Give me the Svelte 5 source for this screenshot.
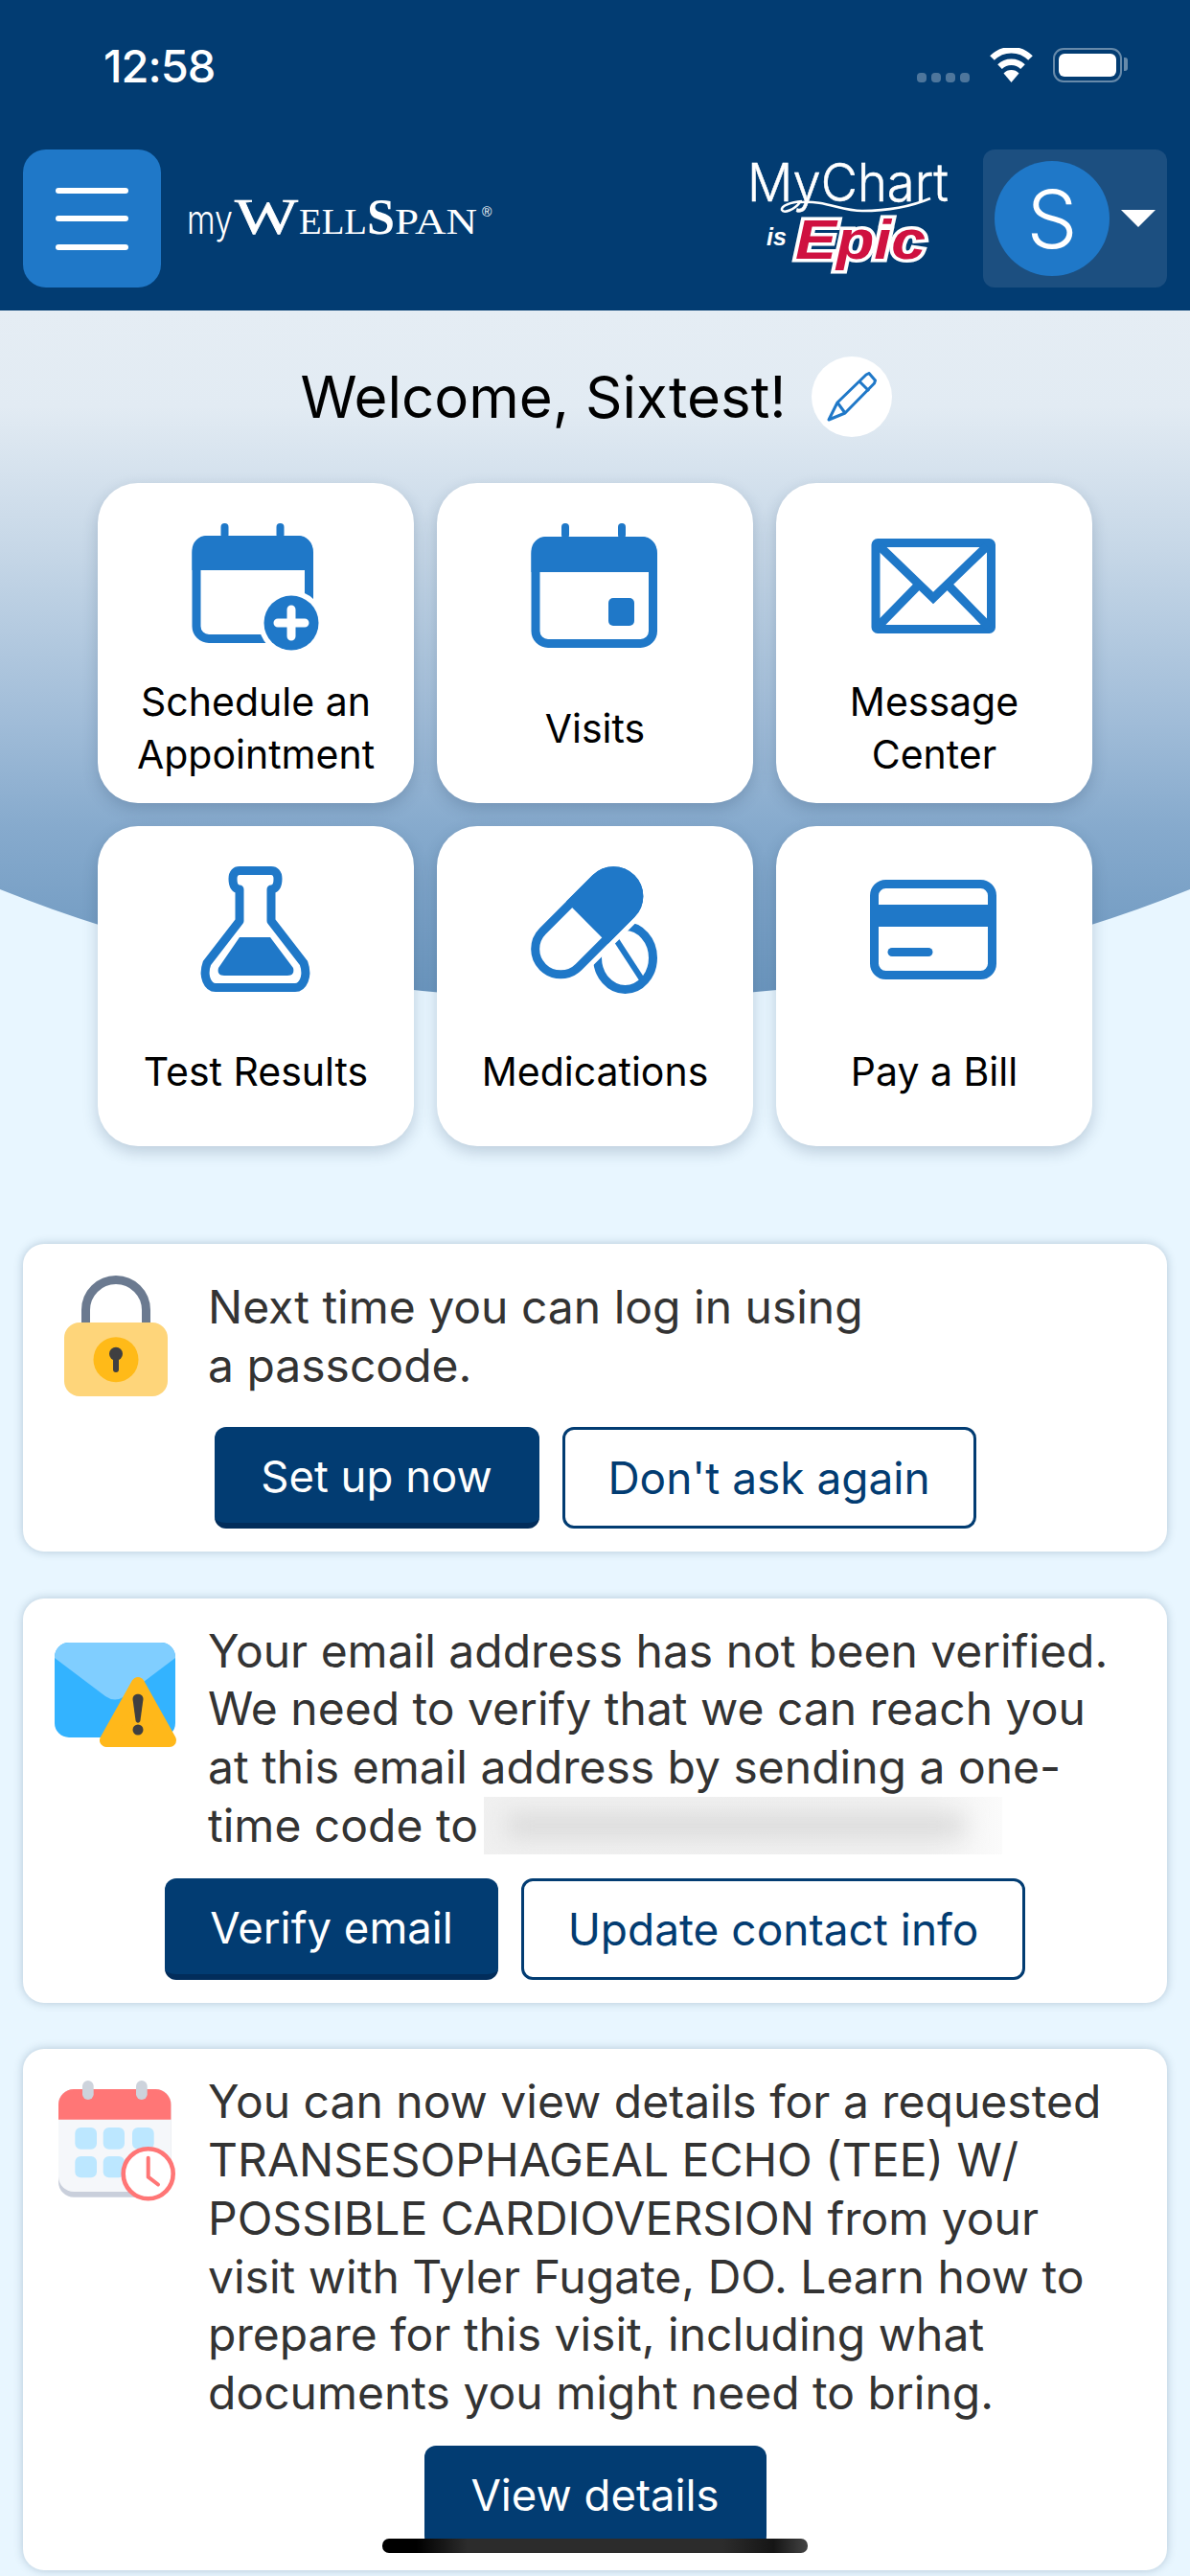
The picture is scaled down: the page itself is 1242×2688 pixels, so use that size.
<script>
  const bands = [0, 1, 2];
  const pegs = [34.5, 92.5];
</script>

<div class="screen">
  <header class="top">
    <div class="status">
      <span class="clock">12:58</span>
      <div class="status-icons">
        <div class="signal"><i></i><i></i><i></i><i></i></div>
        <svg class="wifi" width="47" height="36" viewBox="0 0 47 36">
          <path d="M3.5 10.6a28 28 0 0 1 40 0" fill="none" stroke="#fff" stroke-width="6.5" />
          <path d="M11.5 19.6a17 17 0 0 1 24 0" fill="none" stroke="#fff" stroke-width="6.5" />
          <path d="M23.5 36 L15.5 26.5 a11 11 0 0 1 16 0z" fill="#fff" />
        </svg>
        <div class="battery"><div class="charge"></div></div>
      </div>
    </div>
    <nav class="nav">
      <button class="menu" aria-label="Menu">
        {#each bands as b (b)}<span></span>{/each}
      </button>
      <svg class="wellspan" width="326" height="60" viewBox="0 0 326 60">
        <text x="0" y="46" class="ws-my" textLength="48" lengthAdjust="spacingAndGlyphs">my</text>
        <text x="50" y="46" class="ws-cap" textLength="66" lengthAdjust="spacingAndGlyphs">W</text>
        <text x="117" y="46" class="ws-small" textLength="71" lengthAdjust="spacingAndGlyphs">ELL</text>
        <text x="188" y="46" class="ws-cap bold" textLength="29" lengthAdjust="spacingAndGlyphs">S</text>
        <text x="217" y="46" class="ws-small" textLength="86" lengthAdjust="spacingAndGlyphs">PAN</text>
        <text x="308" y="28" class="ws-reg">®</text>
      </svg>
      <svg class="mychart" width="214" height="140" viewBox="0 -10 214 140">
        <text x="3" y="46" class="mc-name" textLength="210" lengthAdjust="spacingAndGlyphs">MyChart</text>
        <path d="M60 46C48 47 38 51 39 55 41 59 52 55 58 47 85 45 100 56 123 56 150 56 175 51 194 43" fill="none" stroke="#fff" stroke-width="2.6" />
        <text x="23" y="92" class="mc-is">is</text>
        <text x="53" y="106" class="mc-epic" textLength="136" lengthAdjust="spacingAndGlyphs">Epic</text>
      </svg>
      <div class="account">
        <div class="avatar">S</div>
        <span class="caret"></span>
      </div>
    </nav>
  </header>

  <section class="hero">
    <div class="welcome">
      <h1>Welcome, Sixtest!</h1>
      <button class="edit" aria-label="Edit">
        <svg width="52" height="52" viewBox="0 0 52 52">
          <path d="M2 50 11 32 41 3 44 1.500 50.500 9 49.500 12 19 43Z" fill="none" stroke="#1f78c8" stroke-width="3" stroke-linejoin="round" />
          <path d="M34 10 44 20M11 32 19 43" fill="none" stroke="#1f78c8" stroke-width="3" />
        </svg>
      </button>
    </div>

    <div class="tiles">
      <div class="tile">
        <svg class="glyph" width="134" height="134" viewBox="0 0 134 134">
          {#each pegs as x (x)}<rect x={x - 4} y="0" width="8" height="16" rx="4" fill="#1f78c8" />{/each}
          <rect x="5" y="17.500" width="117.500" height="103" rx="13" fill="none" stroke="#1f78c8" stroke-width="9" />
          <path d="M.5 49V28a15 15 0 0 1 15-15h96a15 15 0 0 1 15 15v21z" fill="#1f78c8" />
          <circle cx="104" cy="104" r="34" fill="#fff" />
          <circle cx="104" cy="104" r="28.500" fill="#1f78c8" />
          <path d="M104 90v28M90 104h28" stroke="#fff" stroke-width="9" stroke-linecap="round" />
        </svg>
        <span class="tile-label">Schedule an<br />Appointment</span>
      </div>
      <div class="tile">
        <svg class="glyph" width="134" height="134" viewBox="0 0 134 134">
          <rect x="32" y="0" width="8" height="16" rx="4" fill="#1f78c8" />
          <rect x="91" y="0" width="8" height="16" rx="4" fill="#1f78c8" />
          <rect x="5" y="18.500" width="122.500" height="107" rx="13" fill="none" stroke="#1f78c8" stroke-width="9" />
          <path d="M.5 51V29a15 15 0 0 1 15-15h101a15 15 0 0 1 15 15v22z" fill="#1f78c8" />
          <rect x="81" y="78" width="27" height="29" rx="5" fill="#1f78c8" />
        </svg>
        <span class="tile-label">Visits</span>
      </div>
      <div class="tile">
        <svg class="glyph" width="134" height="134" viewBox="0 0 134 134">
          <rect x="6" y="20.500" width="120.500" height="90" rx="2" fill="none" stroke="#1f78c8" stroke-width="9" />
          <path d="M10 24 66 78 122 24" fill="none" stroke="#1f78c8" stroke-width="9" />
          <path d="M51 64 8 108M81 64 124 108" fill="none" stroke="#1f78c8" stroke-width="9" />
        </svg>
        <span class="tile-label">Message<br />Center</span>
      </div>
      <div class="tile">
        <svg class="glyph" width="134" height="134" viewBox="0 0 134 134">
          <path d="M50 24C46 24 43 21 43 13 43 7 46 4.500 50 4.500H83C87 4.500 90 7 90 13 90 21 87 24 83 24V57L117 101C122 115 116 126.500 108 126.500H25C17 126.500 11 115 16 101L50 57Z" fill="none" stroke="#1f78c8" stroke-width="9" stroke-linejoin="round" />
          <path d="M50 74H82L106 106Q108 114 100 114H34Q26 114 28 106Z" fill="#1f78c8" />
        </svg>
        <span class="tile-label">Test Results</span>
      </div>
      <div class="tile">
        <svg class="glyph" width="134" height="134" viewBox="0 0 134 134">
          <ellipse cx="98.500" cy="95.500" rx="29" ry="33" fill="#fff" stroke="#1f78c8" stroke-width="9" />
          <path d="M88 75 116 118" stroke="#1f78c8" stroke-width="6" />
          <g transform="translate(58.750 58.750) rotate(-45)">
            <rect x="-70" y="-31" width="140" height="62" rx="31" fill="#fff" stroke="#fff" stroke-width="10" />
            <rect x="-65.500" y="-26.500" width="131" height="53" rx="26.500" fill="#fff" stroke="#1f78c8" stroke-width="9" />
            <path d="M0-31H39A31 31 0 0 1 39 31H0Z" fill="#1f78c8" />
          </g>
        </svg>
        <span class="tile-label">Medications</span>
      </div>
      <div class="tile">
        <svg class="glyph" width="134" height="134" viewBox="0 0 134 134">
          <rect x="4.500" y="18.500" width="123" height="95" rx="12" fill="none" stroke="#1f78c8" stroke-width="9" />
          <rect x="0" y="40" width="132" height="23" fill="#1f78c8" />
          <rect x="18.500" y="85" width="47" height="9" rx="4.500" fill="#1f78c8" />
        </svg>
        <span class="tile-label">Pay a Bill</span>
      </div>
    </div>
  </section>

  <main class="notices">
    <article class="notice">
      <div class="notice-main">
        <div class="notice-icon">
          <svg class="icon-lock" width="108" height="126" viewBox="0 0 108 126">
            <path d="M22.500 52V36A31.500 31.500 0 0 1 85.500 36V52" fill="none" stroke="#6b7a90" stroke-width="9" />
            <rect x="0" y="49" width="108" height="77" rx="16" fill="#fed57a" />
            <circle cx="54" cy="87.700" r="23.500" fill="#ffba18" />
            <circle cx="54" cy="81.700" r="7" fill="#3f3f41" />
            <rect x="51" y="82" width="6" height="19" rx="3" fill="#3f3f41" />
          </svg>
        </div>
        <p class="copy copy-short">Next time you can log in using<br />a passcode.</p>
      </div>
      <div class="actions">
        <button class="btn solid pad-a">Set up now</button>
        <button class="btn outline pad-b">Don't ask again</button>
      </div>
    </article>

    <article class="notice">
      <div class="notice-main">
        <div class="notice-icon">
          <svg class="icon-mail" width="127" height="109" viewBox="0 0 127 109">
            <rect x="0" y="0" width="126" height="99" rx="15" fill="#33b3ff" />
            <path d="M0 15A15 15 0 0 1 15 0H111A15 15 0 0 1 126 15V16L73 56Q63 63 53 56L0 16Z" fill="#80ceff" />
            <path d="M87 43 54 102H120Z" fill="#ffb81a" stroke="#ffb81a" stroke-width="14" stroke-linejoin="round" />
            <path d="M81.500 59C81.500 52 92.500 52 92.500 59L89.500 81C89 84.500 85 84.500 84.500 81Z" fill="#3f3f41" />
            <circle cx="87" cy="91" r="5.500" fill="#3f3f41" />
          </svg>
        </div>
        <p class="copy">Your email address has not been verified.<br />We need to verify that we can reach you<br />at this email address by sending a one-<br />time code to <span class="redacted"></span></p>
      </div>
      <div class="actions">
        <button class="btn solid pad-c">Verify email</button>
        <button class="btn outline pad-d">Update contact info</button>
      </div>
    </article>

    <article class="notice">
      <div class="notice-main">
        <div class="notice-icon">
          <svg class="icon-cal" width="122" height="126" viewBox="0 0 122 126">
            <rect x="0" y="9" width="117.400" height="112.700" rx="16" fill="#c9cfdb" />
            <rect x="0" y="9" width="117.400" height="107" rx="16" fill="#f5f7fa" />
            <path d="M0 40.700V25A16 16 0 0 1 16 9H101.400A16 16 0 0 1 117.400 25V40.700Z" fill="#ff7676" />
            <rect x="25" y="0" width="11.700" height="20" rx="5.800" fill="#cdd3dc" />
            <rect x="81" y="0" width="11.700" height="20" rx="5.800" fill="#cdd3dc" />
            <rect x="17.300" y="49" width="22.700" height="22.700" rx="6" fill="#bce7ff" />
            <rect x="46.700" y="49" width="22.300" height="22.700" rx="6" fill="#bce7ff" />
            <rect x="77" y="49" width="22.700" height="22.700" rx="6" fill="#bce7ff" />
            <rect x="17.300" y="79" width="22.700" height="22.300" rx="6" fill="#bce7ff" />
            <rect x="46.700" y="79" width="22.300" height="22.300" rx="6" fill="#bce7ff" />
            <circle cx="93.700" cy="97.300" r="26" fill="#fff" stroke="#ff7676" stroke-width="4.600" />
            <path d="M93.700 80.700V100.700L104 108.500" fill="none" stroke="#ff7676" stroke-width="4" stroke-linecap="round" stroke-linejoin="round" />
          </svg>
        </div>
        <p class="copy">You can now view details for a requested<br />TRANSESOPHAGEAL ECHO (TEE) W/<br />POSSIBLE CARDIOVERSION from your<br />visit with Tyler Fugate, DO. Learn how to<br />prepare for this visit, including what<br />documents you might need to bring.</p>
      </div>
      <div class="actions">
        <button class="btn solid pad-e">View details</button>
      </div>
    </article>
  </main>

  <div class="home-bar"></div>
</div>

<style>
  :global(body) {
    margin: 0;
  }

  .screen {
    position: relative;
    width: 1242px;
    height: 2688px;
    overflow: hidden;
    background: #e8f6ff;
    font-family: Inter, "Liberation Sans", sans-serif;
  }

  /* header */
  .top {
    height: 324px;
    background: #023c72;
  }

  .status {
    display: flex;
    align-items: center;
    justify-content: space-between;
    height: 156px;
    padding: 0 71px 20px 108px;
    box-sizing: border-box;
  }

  .clock {
    font-size: 47px;
    font-weight: 500;
    letter-spacing: -1px;
    color: #fff;
  }

  .status-icons {
    display: flex;
    align-items: flex-end;
  }

  .signal {
    display: flex;
    gap: 5px;
    margin-right: 20px;
  }

  .signal i {
    width: 10px;
    height: 10px;
    border-radius: 4px;
    background: rgba(255, 255, 255, 0.3);
  }

  .wifi {
    margin-right: 20px;
  }

  .battery {
    position: relative;
    box-sizing: border-box;
    width: 72px;
    height: 36px;
    padding: 4px;
    border: 2.500px solid rgba(255, 255, 255, 0.4);
    border-radius: 11px;
  }

  .battery::after {
    content: "";
    position: absolute;
    top: 8px;
    right: -8px;
    width: 4px;
    height: 14px;
    border-radius: 0 3px 3px 0;
    background: rgba(255, 255, 255, 0.4);
  }

  .charge {
    height: 100%;
    border-radius: 6px;
    background: #fff;
  }

  .nav {
    display: flex;
    align-items: center;
    padding: 0 24px;
    height: 144px;
  }

  .menu {
    display: flex;
    flex-direction: column;
    align-items: center;
    justify-content: center;
    gap: 23.500px;
    width: 144px;
    height: 144px;
    padding: 0;
    border: 0;
    border-radius: 24px;
    background: #1f78c8;
  }

  .menu span {
    width: 76px;
    height: 6px;
    border-radius: 3px;
    background: #fff;
  }

  .wellspan {
    margin-left: 27px;
    margin-top: -1px;
  }

  .ws-my {
    font: 300 42px Inter, sans-serif;
    fill: #fff;
  }

  .ws-cap {
    font: 400 52px "Liberation Serif", serif;
    fill: #fff;
    stroke: #fff;
    stroke-width: 0.7px;
  }

  .ws-cap.bold {
    font-weight: 700;
    stroke-width: 0;
  }

  .ws-small {
    font: 400 38px "Liberation Serif", serif;
    fill: #fff;
  }

  .ws-reg {
    font: 400 14px "Liberation Sans", sans-serif;
    fill: #fff;
  }

  .mychart {
    margin-left: auto;
    margin-right: 35px;
    margin-top: -8px;
  }

  .mc-name {
    font: 300 55px Inter, sans-serif;
    fill: #fff;
    stroke: #fff;
    stroke-width: 0.5px;
  }

  .mc-is {
    font: italic 700 25px "Liberation Sans", sans-serif;
    fill: #fff;
  }

  .mc-epic {
    font: italic 700 57px "Liberation Sans", sans-serif;
    fill: #cf1140;
    stroke: #fff;
    stroke-width: 7px;
    paint-order: stroke;
    stroke-linejoin: miter;
  }

  .account {
    display: flex;
    align-items: center;
    gap: 12px;
    width: 192px;
    height: 144px;
    padding-left: 12px;
    box-sizing: border-box;
    border-radius: 12px;
    background: #1c4f80;
  }

  .avatar {
    display: flex;
    align-items: center;
    justify-content: center;
    width: 120px;
    height: 120px;
    border-radius: 50%;
    background: #1f78c8;
    color: #fff;
    font-size: 84px;
    font-weight: 300;
  }

  .caret {
    width: 0;
    height: 0;
    border-left: 18px solid transparent;
    border-right: 18px solid transparent;
    border-top: 18px solid #fff;
  }

  /* hero */
  .hero {
    position: relative;
    height: 872px;
  }

  .hero::before {
    content: "";
    position: absolute;
    top: 0;
    left: 0;
    width: 100%;
    height: 720px;
    background: linear-gradient(#e5edf4 0, #e2ebf3 100px, #c6d7e7 250px, #a0bcd8 430px, #86aacd 540px, #6b96be 712px);
    clip-path: ellipse(1200px 797px at 621px -78px);
  }

  .welcome {
    position: relative;
    display: flex;
    align-items: center;
    justify-content: center;
    gap: 26px;
    height: 180px;
    padding-left: 2px;
  }

  h1 {
    margin: 0;
    font-size: 60px;
    font-weight: 400;
    color: #000;
  }

  .edit {
    display: flex;
    align-items: center;
    justify-content: center;
    width: 84px;
    height: 84px;
    padding: 0;
    border: 0;
    border-radius: 50%;
    background: #fff;
  }

  .tiles {
    position: relative;
    display: grid;
    grid-template-columns: repeat(3, 330px);
    grid-auto-rows: 334px;
    gap: 24px;
    justify-content: center;
  }

  .tile {
    display: flex;
    flex-direction: column;
    align-items: center;
    padding-top: 42px;
    box-sizing: border-box;
    border-radius: 42px;
    background: #fff;
    box-shadow: 0 6px 16px rgba(30, 60, 90, 0.22);
  }

  .glyph {
    flex: none;
    margin-bottom: 25px;
  }

  .tile-label {
    display: flex;
    align-items: center;
    min-height: 110px;
    font-size: 41px;
    line-height: 55px;
    text-align: center;
    color: #000;
  }

  /* notice cards */
  .notices {
    display: flex;
    flex-direction: column;
    gap: 48.500px;
    padding: 102px 24px 0;
  }

  .notice {
    padding: 24px 0;
    border-radius: 22px;
    background: #fff;
    box-shadow: 0 0 10px rgba(20, 60, 90, 0.25);
  }

  .notice-main {
    display: flex;
  }

  .notice-icon {
    display: flex;
    justify-content: center;
    flex: none;
    width: 193px;
    align-items: flex-start;
  }

  .icon-lock {
    margin-top: 9px;
  }

  .icon-mail {
    margin-top: 22px;
  }

  .icon-cal {
    margin-top: 9px;
    margin-left: 3px;
  }

  .copy {
    margin: 0;
    padding-top: 1px;
    font-size: 48px;
    line-height: 60.700px;
    color: #333;
    white-space: nowrap;
  }

  .copy-short {
    padding: 12px 0 9px;
  }

  .redacted {
    position: relative;
    display: inline-block;
    overflow: hidden;
    width: 541px;
    height: 60px;
    margin-left: -7px;
    vertical-align: -13.500px;
    background: linear-gradient(90deg, #f0f0f0, #f1f1f1 85%, #fbfbfb);
  }

  .redacted::before {
    content: "";
    position: absolute;
    top: 20px;
    left: 24px;
    right: 40px;
    bottom: 20px;
    background: #d6d6d6;
    filter: blur(12px);
  }

  .actions {
    display: flex;
    justify-content: center;
    gap: 24px;
    margin-top: 24.600px;
  }

  .btn {
    box-sizing: border-box;
    height: 106px;
    border-radius: 12px;
    font-family: inherit;
    white-space: nowrap;
  }

  .solid {
    padding-top: 4px;
    border: 0;
    border-bottom: 6px solid #022d5b;
    background: #023c72;
    color: #fff;
    font-size: 45.500px;
  }

  .outline {
    padding: 0;
    border: 3px solid #023c72;
    background: #fff;
    color: #023c72;
    font-size: 46px;
  }

  .pad-a {
    width: 339px;
  }

  .pad-b {
    width: 432px;
  }

  .pad-c {
    width: 348px;
  }

  .pad-d {
    width: 526px;
  }

  .pad-e {
    width: 357px;
  }

  .home-bar {
    position: absolute;
    left: 399px;
    top: 2649px;
    width: 444px;
    height: 15px;
    border-radius: 7px;
    background: linear-gradient(90deg, #000, #000 8%, #2c2c2c 20%, #2c2c2c 80%, #151515 92%, #444);
  }
</style>
